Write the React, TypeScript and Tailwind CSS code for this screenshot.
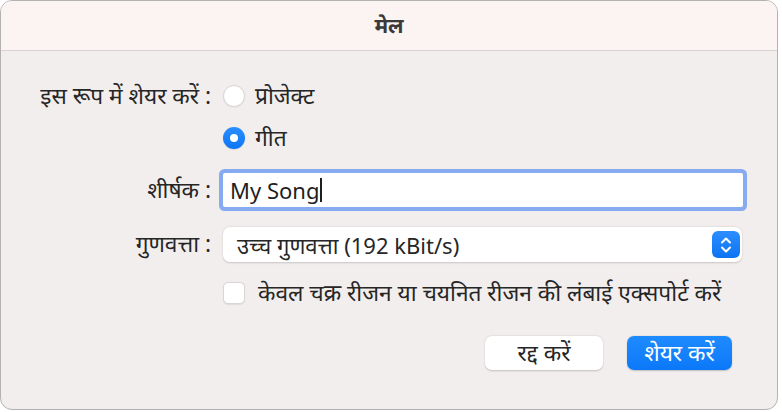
import React from "react";

const font = { fontFamily: '"Noto Sans", "Liberation Sans", sans-serif' };

// Code: small radio button
const Radio = ({ checked, label }: { checked?: boolean; label: string }) => (
  <div className="flex items-center gap-[10px] h-[28px]">
    {checked ? (
      <div className="w-[22px] h-[22px] rounded-full bg-gradient-to-b from-[#2a8dff] to-[#0a76f5] flex items-center justify-center shadow-[0_0.5px_1px_rgba(0,0,0,0.2)]">
        <div className="w-[8px] h-[8px] rounded-full bg-white" />
      </div>
    ) : (
      <div className="w-[22px] h-[22px] rounded-full bg-white border border-[#d9d5d5] shadow-[0_0.5px_1px_rgba(0,0,0,0.08)]" />
    )}
    <span className="text-[22.7px] leading-none text-[#262626]">{label}</span>
  </div>
);

const App = () => {
  return (
    <main className="w-[782px] h-[412px] bg-white" style={font}>
      <div className="w-[778px] h-[410px] rounded-[12px] border-[1.5px] border-[#b3b1b1] overflow-hidden flex flex-col bg-[#f3eeee]">
        {/* title bar */}
        <div className="h-[50px] shrink-0 bg-[#fcf3f3] border-b border-[#d9d4d4] flex items-center justify-center">
          <h1 className="text-[21px] leading-none font-bold text-[#3a3a3a]">मेल</h1>
        </div>

        <div className="grid grid-cols-[210px_1fr] gap-x-[12px] pt-[31px] pr-[34px] text-[#262626]">
          <div className="h-[28px] flex items-center justify-end text-[22.7px] leading-none whitespace-nowrap">इस रूप में शेयर करें :</div>
          <Radio label="प्रोजेक्ट" />

          <div className="mt-[14px]" />
          <div className="mt-[14px]">
            <Radio checked label="गीत" />
          </div>

          <div className="mt-[21px] h-[34px] flex items-center justify-end text-[22.7px] leading-none">शीर्षक :</div>
          <div className="mt-[21px] h-[34px] bg-white ring-[4px] ring-[#87abf0] rounded-[2px] flex items-center pl-[7px]">
            <span className="text-[22px] leading-none text-[#1f1f1f]">My Song</span>
            <span className="w-[1.5px] h-[24px] bg-[#1f1f1f] ml-[1px]" />
          </div>

          <div className="mt-[20px] h-[35px] flex items-center justify-end text-[22.7px] leading-none">गुणवत्ता :</div>
          <div className="mt-[20px] mr-[1px] h-[35px] bg-white rounded-[7px] shadow-[0_0.5px_2px_rgba(0,0,0,0.18)] flex items-center justify-between pl-[14px] pr-[2px]">
            <span className="text-[22px] leading-none text-[#262626]">उच्च गुणवत्ता (192 kBit/s)</span>
            <div className="w-[28px] h-[27px] rounded-[6px] bg-gradient-to-b from-[#2b8eff] to-[#0a74f2] flex items-center justify-center">
              <svg width="14" height="20" viewBox="0 0 14 20" fill="none" stroke="white" strokeWidth="2" strokeLinecap="round" strokeLinejoin="round">
                <path d="M3 7.5 L7 3.5 L11 7.5" />
                <path d="M3 12.5 L7 16.5 L11 12.5" />
              </svg>
            </div>
          </div>

          <div className="mt-[18px]" />
          <div className="mt-[18px] h-[26px] flex items-center gap-[13px]">
            <div className="w-[22px] h-[22px] rounded-[5px] bg-white border border-[#d9d5d5] shadow-[0_0.5px_1px_rgba(0,0,0,0.08)]" />
            <span className="text-[22.7px] leading-none text-[#262626] whitespace-nowrap">केवल चक्र रीजन या चयनित रीजन की लंबाई एक्सपोर्ट करें</span>
          </div>
        </div>

        <div className="flex justify-end gap-[24px] pr-[45px] mt-[30px]">
          <button className="w-[118px] h-[34px] rounded-[7px] bg-white shadow-[0_0.5px_2px_rgba(0,0,0,0.2)] text-[22.7px] leading-none text-[#262626]">
            रद्द करें
          </button>
          <button className="w-[105px] h-[34px] rounded-[7px] bg-gradient-to-b from-[#1f8bff] to-[#0a78f8] shadow-[0_0.5px_1.5px_rgba(0,0,0,0.2)] text-[22.7px] leading-none text-white">
            शेयर करें
          </button>
        </div>
      </div>
    </main>
  );
};

export default App;
